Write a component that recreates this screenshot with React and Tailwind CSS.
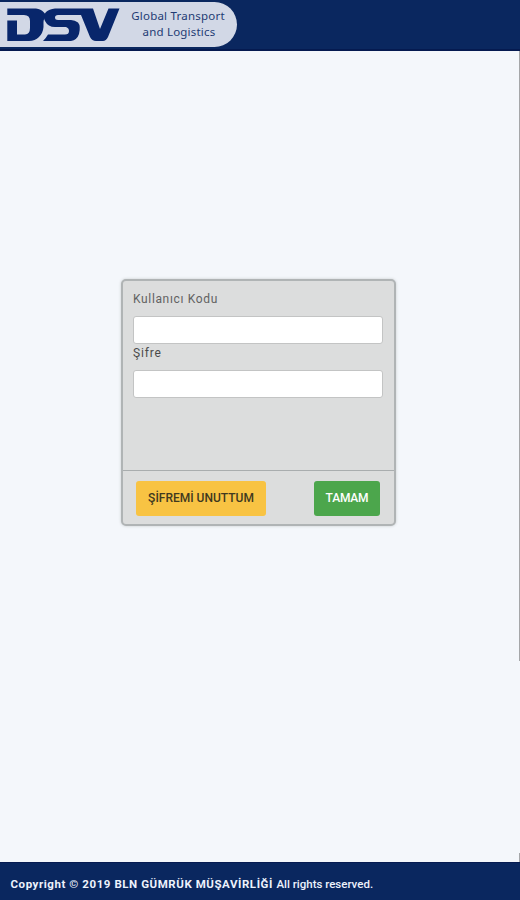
function Logo() {
  return (
    <svg className="ml-[7px] shrink-0" width="113" height="34" viewBox="0 0 113 34" fill="#08266b">
      <path d="M0.3 0.5H29Q34 1 36.5 4L40 8Q36.5 10 36.5 14V19Q36 25 32 29Q28 33 22 33H0.3V12.5H10V26.5H18Q23 26 23 20V13Q23 7 17 7H0.3Z" />
      <path d="M86 0.5H48Q42 1 39 4Q35.5 8 38 13Q41 19 48 19H59Q62 20 62 23Q62 26.5 58 26.5H41Q39 30 36 33H64Q70 32 72 26Q74 18 71 14.5Q68 12 64 12H51Q48 12 48 9.5Q48 7 51 7H74L83 29Q85 33 89 33H96Q99 33 101 29L112.5 0.5H101.5L93 21Z" />
    </svg>
  );
}

export default function App() {
  return (
    <div className="relative flex h-[900px] w-[520px] flex-col overflow-hidden bg-[#f4f7fb] font-['Roboto','Liberation_Sans',sans-serif]">
      <header className="h-[51px] shrink-0 border-b-2 border-[#051a50] bg-[#0a275f] pt-[2px]">
        <div className="flex h-[45px] w-[237px] items-start rounded-r-full bg-[#d2d8e6] pt-[6px]">
          <Logo />
          <div className="ml-[9px] flex w-[98px] shrink-0 flex-col items-center font-['Noto_Sans',sans-serif] text-[11.5px] leading-[16px] whitespace-nowrap text-[#233b74]">
            <span className="block tracking-[0.22px]">Global Transport</span>
            <span className="block pl-[2px] tracking-[0.2px]">and Logistics</span>
          </div>
        </div>
      </header>

      <main className="flex-1">
        <form className="mt-[228px] ml-[121px] flex h-[247px] w-[275px] flex-col rounded-[5px] border-2 border-[#b0b4b5] bg-[#dcdddd] shadow-[0_0_3px_#c5cacc]">
          <div className="flex h-[190px] flex-col border-b border-[#a9adae] px-[10px] pt-[9px] text-[12px] text-[#626262]">
            <label className="h-[26px] leading-[18px] tracking-[0.65px]">Kullanıcı Kodu</label>
            <input className="h-[28px] w-[250px] rounded-[3px] border border-[#c3c4c4] bg-white" />
            <label className="h-[26px] leading-[18px] tracking-[0.85px] text-[#4b4b4b]">Şifre</label>
            <input className="h-[28px] w-[250px] rounded-[3px] border border-[#c3c4c4] bg-white" />
          </div>
          <div className="flex justify-between pt-[10px] pr-[14px] pl-[13px] text-[12px] font-medium">
            <button type="button" className="h-[35px] w-[130px] rounded-[3px] bg-[#f8c343] pb-[2px] whitespace-nowrap text-[#40391f]">ŞİFREMİ UNUTTUM</button>
            <button type="button" className="h-[35px] w-[66px] rounded-[3px] bg-[#4ca64c] pb-[2px] tracking-[-0.2px] text-white">TAMAM</button>
          </div>
        </form>
      </main>

      <footer className="flex h-[38px] shrink-0 items-center border-t border-[#061b51] bg-[#0a275f] pt-[6px] pl-[10.5px] text-[11.5px] whitespace-nowrap text-[#edf2fc]">
        <b className="tracking-[0.56px]">Copyright © 2019 BLN GÜMRÜK MÜŞAVİRLİĞİ</b>
        <span className="ml-[3.5px] font-medium">All rights reserved.</span>
      </footer>

      <div className="absolute top-[51px] right-0 h-[610px] w-px bg-[#a5a7a9]" />
      <div className="absolute top-[853px] right-0 h-[9px] w-px bg-[#a5a7a9]" />
    </div>
  );
}
